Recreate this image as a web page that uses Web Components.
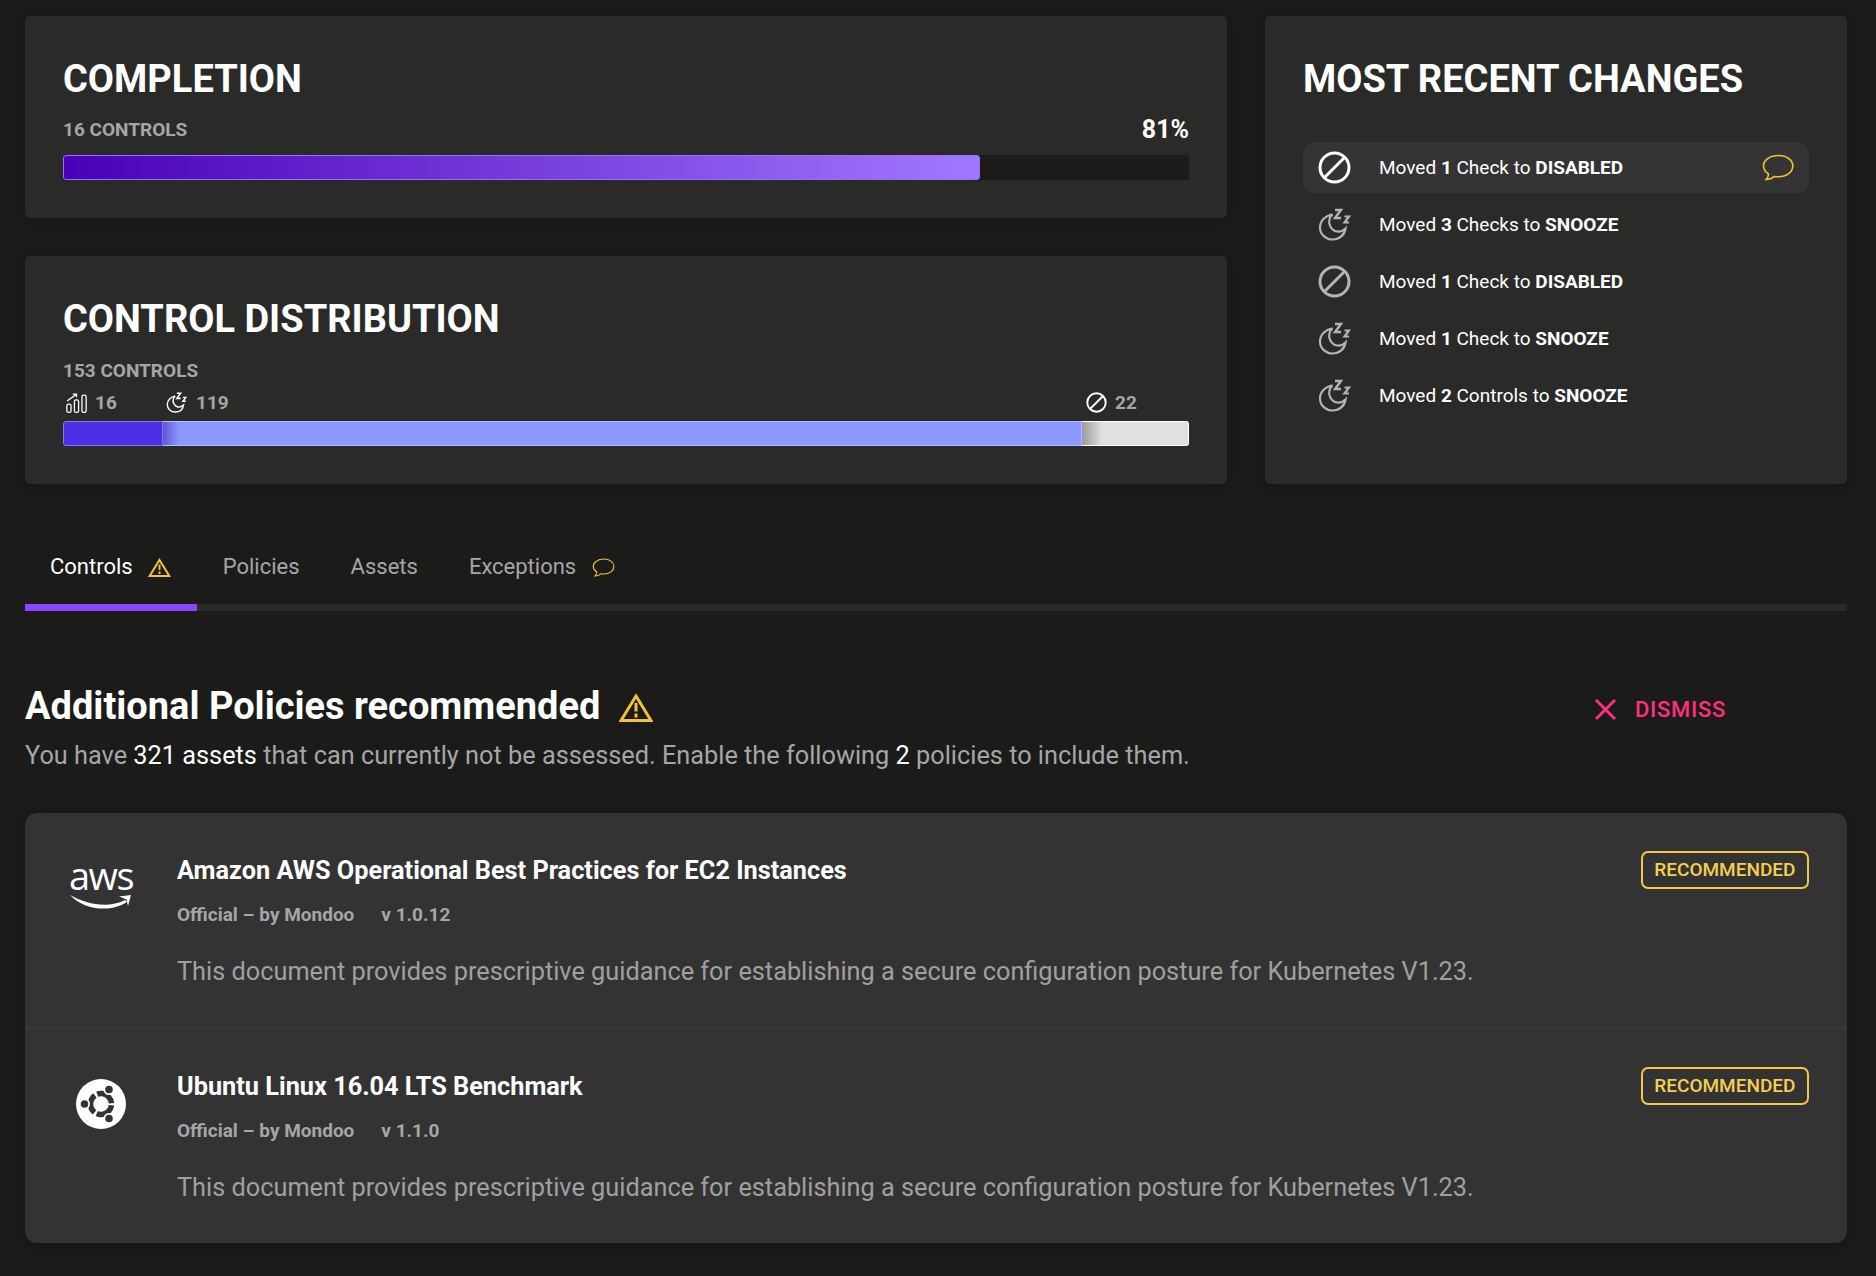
<!DOCTYPE html>
<html>
<head>
<meta charset="utf-8">
<title>Space overview</title>
<style>
  html, body { margin: 0; background: #1b1b1a; }
  body { font-family: Roboto, "Liberation Sans", sans-serif; color: #fff; }
</style>
</head>
<body>
<app-page>
  <div slot="left">
    <stat-card heading="COMPLETION" label="16 CONTROLS" value="81%">
      <progress-bar percent="81.4"></progress-bar>
    </stat-card>
    <stat-card heading="CONTROL DISTRIBUTION" label="153 CONTROLS" gap="16">
      <dist-bar></dist-bar>
    </stat-card>
  </div>
  <recent-changes slot="right">
    <change-item icon="ban" active note>Moved <b>1</b> Check to <b>DISABLED</b></change-item>
    <change-item icon="snooze">Moved <b>3</b> Checks to <b>SNOOZE</b></change-item>
    <change-item icon="ban">Moved <b>1</b> Check to <b>DISABLED</b></change-item>
    <change-item icon="snooze">Moved <b>1</b> Check to <b>SNOOZE</b></change-item>
    <change-item icon="snooze">Moved <b>2</b> Controls to <b>SNOOZE</b></change-item>
  </recent-changes>
  <tab-bar slot="tabs">
    <tab-item active icon="warn">Controls</tab-item>
    <tab-item>Policies</tab-item>
    <tab-item>Assets</tab-item>
    <tab-item icon="note">Exceptions</tab-item>
  </tab-bar>
  <recommend-head slot="main">
    You have <em>321 assets</em> that can currently not be assessed. Enable the following <em>2</em> policies to include them.
  </recommend-head>
  <policy-list slot="main">
    <policy-row heading="Amazon AWS Operational Best Practices for EC2 Instances" version="v 1.0.12" logo="aws"></policy-row>
    <policy-row heading="Ubuntu Linux 16.04 LTS Benchmark" version="v 1.1.0" logo="ubuntu"></policy-row>
  </policy-list>
</app-page>

<script>
const icons = {
  ban: `<svg viewBox="0 0 33 33" fill="none" stroke="currentColor" stroke-width="3"><circle cx="16.5" cy="16.5" r="14.5"/><path d="M7 26 26 7"/></svg>`,
  snooze: `<svg viewBox="0 0 33 33" fill="none" stroke="currentColor" stroke-width="2.200"><path d="M14.5 6.5C7.5 7.5 2 12.700 2 19.500 2 26.500 8 31.500 14.500 31.500 21.500 31.500 26.500 27 27.500 20.500 25 23 22 24 19 23.500 13 22.500 10 16 11.500 11 12 9 13 7.500 14.500 6.500Z"/><path d="M17 2H23L17 10H23" stroke-width="2.400"/><path d="M26.500 8.500H31L26.500 14.500H31" stroke-width="2.200"/></svg>`,
  bars: `<svg viewBox="0 0 20 20" fill="none" stroke="currentColor" stroke-width="1.200"><rect x=".8" y="11.500" width="4" height="7.800" rx="1.500"/><rect x="8" y="7.500" width="4" height="11.800" rx="1.500"/><rect x="15.200" y="3" width="4" height="16.300" rx="1.500"/><path d="M1 8.500 9.500 2.500M6.500 2H10V5"/></svg>`,
  warn: `<svg viewBox="0 0 34 29" fill="none" stroke="currentColor" stroke-width="3"><path d="M17 3 32 27.500H2Z" stroke-linejoin="miter"/><path d="M17 10V18.500M17 20.500V24.500"/></svg>`,
  note: `<svg viewBox="0 0 32 27" fill="none" stroke="currentColor" stroke-width="1.600"><path d="M16.500 1.500C8 1.500 1.500 6 1.500 12 1.500 15.500 3.500 18 6.500 20 6.500 22 5.500 24 4 25.500 7.500 25.500 10 24.500 12 22.500 13.500 22.700 15 22.800 16.500 22.800 24.500 22.800 30.800 18 30.800 12 30.800 6 24.500 1.500 16.500 1.500Z"/></svg>`,
  close: `<svg viewBox="0 0 23 23" fill="none" stroke="currentColor" stroke-width="3"><path d="M2 2 21 21M21 2 2 21"/></svg>`,
}

class AppPage extends HTMLElement {
  constructor() {
    super()
    this.attachShadow({ mode: 'open' }).innerHTML = `
      <style>
        :host { display: block; padding: 16px 29px 33px 25px; }
        .top { display: grid; grid-template-columns: 1202px 582px; gap: 38px; }
        ::slotted([slot="left"]) { display: flex; flex-direction: column; gap: 38px; }
        .tabs { margin-top: 46px; }
        .main { display: block; }
      </style>
      <div class="top"><slot name="left"></slot><slot name="right"></slot></div>
      <div class="tabs"><slot name="tabs"></slot></div>
      <div class="main"><slot name="main"></slot></div>`
  }
}

class StatCard extends HTMLElement {
  constructor() {
    super()
    const value = this.getAttribute('value')
    this.attachShadow({ mode: 'open' }).innerHTML = `
      <style>
        :host { display: block; background: #2a2a29; border-radius: 5px; padding: 38px; box-shadow: 0 2px 14px rgba(0,0,0,.25); }
        h2 { margin: 0 0 -2px; font-size: 38px; line-height: 50px; font-weight: 700; color: #fff; }
        .row { display: flex; justify-content: space-between; align-items: center; margin-top: ${this.getAttribute('gap') || 15}px; height: 24px; }
        .label { font-size: 19px; font-weight: 700; color: #a6a6a8; }
        .value { font-size: 25px; font-weight: 700; color: #fff; }
      </style>
      <h2>${this.getAttribute('heading')}</h2>
      <div class="row">
        <span class="label">${this.getAttribute('label')}</span>
        ${value ? `<span class="value">${value}</span>` : ''}
      </div>
      <slot></slot>`
  }
}

class ProgressBar extends HTMLElement {
  constructor() {
    super()
    this.attachShadow({ mode: 'open' }).innerHTML = `
      <style>
        :host { display: block; margin-top: 14px; height: 25px; background: #1c1b1a; border-radius: 3px; }
        div { box-sizing: border-box; height: 100%; width: ${this.getAttribute('percent')}%; border: 1px solid #9a6cff; border-radius: 3px;
          background: linear-gradient(90deg, #4a00b8 0%, #a078ff 100%); }
      </style>
      <div></div>`
  }
}

class DistBar extends HTMLElement {
  constructor() {
    super()
    this.attachShadow({ mode: 'open' }).innerHTML = `
      <style>
        :host { display: block; }
        .legend { display: grid; grid-template-columns: 100px 920px 106px; margin-top: 8px; height: 24px; }
        .legend span { display: flex; align-items: center; gap: 8px; padding-left: 3px; font-size: 19px; font-weight: 700; color: #a6a6a8; }
        .legend span:nth-child(2) { gap: 9px; }
        .legend i { display: flex; width: 21px; height: 21px; color: #fff; }
        svg { width: 100%; height: 100%; }
        .bar { display: grid; grid-template-columns: 100px 919px 107px; height: 25px; margin-top: 7px; }
        .bar div { box-sizing: border-box; border: 1px solid; }
        .a { background: #4b30e6; border-color: #8278f0 !important; border-radius: 3px 0 0 3px; }
        .b { background: linear-gradient(90deg, #5f55d8 0, #8a98ff 16px); border-color: #b4bcff !important; border-left: 0 !important; }
        .c { background: linear-gradient(90deg, #9a9a9b 0, #e0e0e2 20px); border-color: #fff !important; border-left: 0 !important; border-radius: 0 3px 3px 0; }
      </style>
      <div class="legend">
        <span><i>${icons.bars}</i>16</span>
        <span><i>${icons.snooze}</i>119</span>
        <span><i>${icons.ban}</i>22</span>
      </div>
      <div class="bar"><div class="a"></div><div class="b"></div><div class="c"></div></div>`
  }
}

class RecentChanges extends HTMLElement {
  constructor() {
    super()
    this.attachShadow({ mode: 'open' }).innerHTML = `
      <style>
        :host { display: block; background: #2a2a29; border-radius: 5px; padding: 38px; box-shadow: 0 2px 14px rgba(0,0,0,.25); }
        h2 { margin: 0 0 38px; font-size: 38px; line-height: 50px; font-weight: 700; color: #fff; }
        .list { display: flex; flex-direction: column; gap: 6px; }
      </style>
      <h2>MOST RECENT CHANGES</h2>
      <div class="list"><slot></slot></div>`
  }
}

class ChangeItem extends HTMLElement {
  constructor() {
    super()
    const active = this.hasAttribute('active')
    this.attachShadow({ mode: 'open' }).innerHTML = `
      <style>
        :host { display: flex; align-items: center; height: 51px; padding: 0 15px; border-radius: 12px; font-size: 19px; color: #fff; ${active ? 'background: #343434;' : ''} }
        .icon { display: flex; width: 33px; height: 33px; margin-right: 28px; color: ${active ? '#fff' : '#b4b4b4'}; }
        svg { width: 100%; height: 100%; }
        .text { flex: 1; }
        ::slotted(b) { font-weight: 700; }
        .note { display: flex; width: 32px; height: 27px; margin-left: -1px; color: #f1c232; }
      </style>
      <span class="icon">${icons[this.getAttribute('icon')]}</span>
      <span class="text"><slot></slot></span>
      ${this.hasAttribute('note') ? `<span class="note">${icons.note}</span>` : ''}`
  }
}

class TabBar extends HTMLElement {
  constructor() {
    super()
    this.attachShadow({ mode: 'open' }).innerHTML = `
      <style>
        :host { display: flex; box-shadow: inset 0 -7px 0 #2a2a29; }
      </style>
      <slot></slot>`
  }
}

class TabItem extends HTMLElement {
  constructor() {
    super()
    const icon = this.getAttribute('icon')
    const active = this.hasAttribute('active')
    this.attachShadow({ mode: 'open' }).innerHTML = `
      <style>
        :host { display: flex; align-items: center; gap: ${active ? 15 : 16}px; height: 74px; padding: 0 ${active ? 26 : 25}px 7px 25px; margin-right: 1px; font-size: 22px; line-height: 24px;
          color: ${active ? '#fff' : '#a6a6a8'}; ${active ? 'box-shadow: inset 0 -7px 0 #8a46ff;' : ''} }
        i { display: flex; width: 23px; height: 19px; color: #f1c232; }
        svg { width: 100%; height: 100%; }
      </style>
      <slot></slot>${icon ? `<i>${icons[icon]}</i>` : ''}`
  }
}

class RecommendHead extends HTMLElement {
  constructor() {
    super()
    this.attachShadow({ mode: 'open' }).innerHTML = `
      <style>
        :host { display: flex; justify-content: space-between; padding-top: 73px; }
        h2 { display: flex; align-items: center; gap: 19px; margin: 0; font-size: 38px; line-height: 44px; font-weight: 700; color: #fff; }
        h2 i { display: flex; width: 34px; height: 29px; color: #f1c232; margin-top: 2px; }
        p { margin: 10px 0 0; font-size: 25.3px; line-height: 36px; color: #a6a6a8; }
        ::slotted(em) { font-style: normal; color: #fff; }
        .dismiss { display: flex; align-items: center; gap: 18px; height: 44px; margin: 3px 121px 0 0; font-size: 22px; font-weight: 500; letter-spacing: .7px; color: #ff2e7e; }
        .dismiss i { display: flex; width: 23px; height: 23px; }
        svg { width: 100%; height: 100%; }
      </style>
      <div>
        <h2>Additional Policies recommended <i>${icons.warn}</i></h2>
        <p><slot></slot></p>
      </div>
      <div class="dismiss"><i>${icons.close}</i>DISMISS</div>`
  }
}

class PolicyList extends HTMLElement {
  constructor() {
    super()
    this.attachShadow({ mode: 'open' }).innerHTML = `
      <style>
        :host { display: block; margin-top: 39px; background: #333; border-radius: 12px; box-shadow: 0 2px 14px rgba(0,0,0,.25); }
        ::slotted(policy-row:not(:first-child)) { border-top: 1px solid #3c3c3c; }
      </style>
      <slot></slot>`
  }
}

class PolicyRow extends HTMLElement {
  constructor() {
    super()
    const logos = {
      aws: `<div class="aws"><span>aws</span><svg viewBox="0 0 62 16" fill="#fff"><path d="M0 1C16 10 38 15 55 6L57 8C40 19 14 16 0 1Z"/><path d="M49 2.500 61 1 58 12 56.500 5.500Z"/></svg></div>`,
      ubuntu: `<svg class="ubuntu" viewBox="0 0 50 50"><circle cx="25" cy="25" r="25" fill="#fff"/><circle cx="25" cy="25" r="10.500" fill="none" stroke="#333" stroke-width="5.500" stroke-dasharray="19.500 2.500" transform="rotate(7 25 25)"/><g fill="#fff"><circle cx="33" cy="10.500" r="5.500"/><circle cx="8.500" cy="25" r="5.500"/><circle cx="33" cy="39.500" r="5.500"/></g><g fill="#333"><circle cx="33" cy="10.500" r="3.800"/><circle cx="8.500" cy="25" r="3.800"/><circle cx="33" cy="39.500" r="3.800"/></g></svg>`,
    }
    this.attachShadow({ mode: 'open' }).innerHTML = `
      <style>
        :host { display: grid; grid-template-columns: 62px 1fr auto; column-gap: 45px; box-sizing: border-box; height: 215px; padding: 38px 38px 0 45px; }
        .logo { grid-column: 1; grid-row: 1; display: flex; justify-content: center; align-items: flex-start; padding-top: 12px; }
        .aws { width: 62px; margin-top: -6px; display: flex; flex-direction: column; align-items: center; }
        .aws span { font-family: "Open Sans", sans-serif; font-size: 38px; line-height: 36px; color: #fff; letter-spacing: -1.5px; }
        .aws svg { width: 62px; height: 16px; margin-top: 1px; }
        .ubuntu { width: 50px; height: 50px; }
        .body { grid-column: 2; grid-row: 1; }
        h3 { margin: 4px 0 0; font-size: 25.3px; line-height: 32px; font-weight: 700; color: #fff; }
        .meta { display: flex; gap: 27px; margin-top: 16px; font-size: 19px; line-height: 24px; font-weight: 700; color: #a6a6a8; }
        p { margin: 27px 0 0; font-size: 25.3px; line-height: 36px; color: #a0a0a0; }
        .badge { grid-column: 3; grid-row: 1; box-sizing: border-box; height: 38px; padding: 0 11.500px; border: 2px solid #f1c94a; border-radius: 7px; font-size: 19px; line-height: 34px; font-weight: 500; color: #f5cf4f; }
      </style>
      <div class="logo">${logos[this.getAttribute('logo')]}</div>
      <div class="body">
        <h3>${this.getAttribute('heading')}</h3>
        <div class="meta"><span>Official – by Mondoo</span><span>${this.getAttribute('version')}</span></div>
        <p>This document provides prescriptive guidance for establishing a secure configuration posture for Kubernetes V1.23.</p>
      </div>
      <div class="badge">RECOMMENDED</div>`
  }
}

customElements.define('app-page', AppPage)
customElements.define('stat-card', StatCard)
customElements.define('progress-bar', ProgressBar)
customElements.define('dist-bar', DistBar)
customElements.define('recent-changes', RecentChanges)
customElements.define('change-item', ChangeItem)
customElements.define('tab-bar', TabBar)
customElements.define('tab-item', TabItem)
customElements.define('recommend-head', RecommendHead)
customElements.define('policy-list', PolicyList)
customElements.define('policy-row', PolicyRow)
</script>
</body>
</html>
